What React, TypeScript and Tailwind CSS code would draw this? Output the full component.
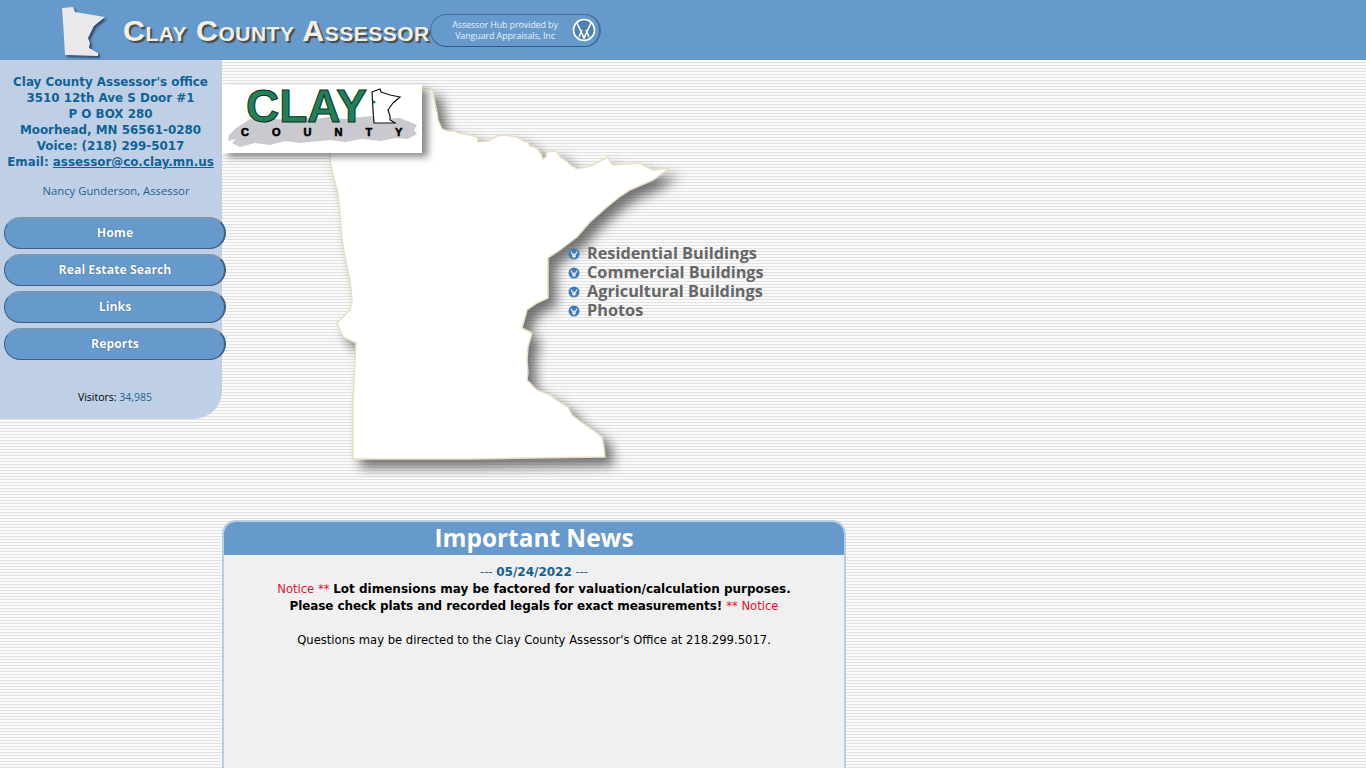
import React from "react";

const mapPts = "330,153 422,88 433,90 435,103 437,112 438,120 442,129 448,131 455,131 458,133 470,135 477,137 478,142 488,141 497,136 505,135 517,137 523,141 528,142 530,146 537,148 541,154 543,159 546,157 547,152 553,151 557,152 560,157 565,160 572,166 577,169 586,167 593,165 600,161 608,157 610,162 613,165 625,164 640,163 647,167 653,170 662,169 670,168 653,180 630,190 618,198 607,207 590,222 577,237 560,250 548,258 548,298 537,303 527,310 522,328 532,333 528,347 527,360 528,372 527,380 537,390 550,395 558,401 568,407 572,415 580,421 590,428 597,433 602,437 604,447 605,457 470,459 353,459 353,400 356,343 343,337 337,323 350,310 352,300 350,280 346,262 342,240 340,215 338,193 333,175 330,160";
const smallPts = "62,8 73,7 75,12 87,14 105,17 94,26 88,38 90,43 89,48 98,53 98,56 65,55 64,37";
const miniPts = "372,92 380,89 381,92 390,95 400,97 393,103 388,110 390,116 390,120 395,123 374,123 373,110";
const brushPts = "229,135 236,128 244,123 250,119 262,121 270,118 285,120 300,116 312,119 330,117 345,119 370,116 385,119 400,118 410,122 417,125 414,130 417,134 408,139 396,138 380,141 362,139 345,142 330,140 300,143 285,141 270,145 255,143 240,147 232,143 236,139 228,141";

function Bullet() {
  return (
    <svg width="12" height="12" viewBox="0 0 12 12" className="shrink-0">
      <circle cx="6" cy="6" r="5.5" fill="#3f7cbc" />
      <path d="M3 3.5 L6 9.5 L9 3.5 M4.5 9 L6 6 L7.5 9" fill="none" stroke="#dfe9f4" strokeWidth="1.2" />
    </svg>
  );
}

function NavButton({ label }: { label: string }) {
  return (
    <a className="flex h-[32px] w-[222px] items-center justify-center rounded-full border border-t-2 border-r-2 border-[#3d5f85] border-t-[#7f95ad] bg-[#6699cc] pl-[1px] text-[12.3px] font-bold text-white [font-family:'Open_Sans',sans-serif] [text-shadow:0_0_1px_#1f4f80]">
      {label}
    </a>
  );
}

export default function App() {
  const font = "[font-family:'DejaVu_Sans','Liberation_Sans',sans-serif]";
  return (
    <div className={`flex h-screen flex-col overflow-hidden bg-[repeating-linear-gradient(180deg,#fafafa_0px,#fafafa_2px,#e2e2e2_2px,#e2e2e2_3px)] ${font}`}>
      <header className="relative flex h-[60px] shrink-0 items-center bg-[#6699cc] pl-[123px] pt-[2px]">
        <svg className="absolute left-0 top-0" width="120" height="60" viewBox="0 0 120 60">
          <polygon points={smallPts} fill="#e9e9e9" className="drop-shadow-[2px_2px_1px_rgba(30,50,80,0.8)]" />
        </svg>
        <h1 className="z-10 w-[307px] whitespace-nowrap text-[30.4px] font-bold tracking-[0.5px] text-[#efefe8] [font-family:'Liberation_Sans',sans-serif] [font-variant:small-caps] [text-shadow:2px_2px_1px_#4a4a40]">
          Clay County Assessor
        </h1>
        <div className="mt-[-2px] flex h-[33px] w-[171px] items-center justify-between rounded-full border border-r-2 border-[#3f6c9a] border-b-[#2f5a86] pl-[15px] pr-[3px]">
          <p className="w-[118px] whitespace-nowrap text-center text-[9px] leading-[11px] tracking-[-0.15px] text-[#e8eff7] [font-family:'Open_Sans',sans-serif]">
            Assessor Hub provided by
            <br />
            Vanguard Appraisals, Inc
          </p>
          <svg width="24" height="24" viewBox="0 0 24 24">
            <circle cx="12" cy="12" r="10.5" fill="#4d80b5" stroke="#ffffff" strokeWidth="1.6" />
            <path d="M5 5 L12 20 L19 5 M7 19 L10 12 M14 12 L17 19 M8 15 H10 M14 15 H16" fill="none" stroke="#ffffff" strokeWidth="1.6" />
          </svg>
        </div>
      </header>

      <div className="flex min-h-0 flex-1">
        <aside className="h-[359px] w-[222px] shrink-0 rounded-br-[28px] bg-[#bfd0e6] pt-[14px]">
          <div className="pr-[1px] text-center text-[11.9px] font-bold leading-[16px] text-[#0f6297]">
            <p>Clay County Assessor's office</p>
            <p>3510 12th Ave S Door #1</p>
            <p>P O BOX 280</p>
            <p>Moorhead, MN 56561-0280</p>
            <p>Voice: (218) 299-5017</p>
            <p>
              Email: <a className="underline">assessor@co.clay.mn.us</a>
            </p>
          </div>
          <p className="mt-[13px] pl-[10px] text-center text-[11.3px] leading-[16px] text-[#1f5f90] [font-family:'Open_Sans',sans-serif]">Nancy Gunderson, Assessor</p>
          <nav className="relative z-10 mt-[18px] flex flex-col gap-[5px] pl-[4px]">
            <NavButton label="Home" />
            <NavButton label="Real Estate Search" />
            <NavButton label="Links" />
            <NavButton label="Reports" />
          </nav>
          <p className="mt-[30px] pl-[8px] text-center text-[10.5px] leading-[14px] text-black [font-family:'Open_Sans',sans-serif]">
            Visitors: <span className="text-[#1f5f90]">34,985</span>
          </p>
        </aside>

        <main className="flex min-w-0 flex-1 flex-col">
          <section className="relative h-[460px] shrink-0">
            <svg className="absolute left-0 top-0" width="700" height="460" viewBox="222 60 700 460">
              <polygon
                points={mapPts}
                fill="#ffffff"
                stroke="#e8dfc6"
                strokeWidth="1.5"
                className="drop-shadow-[8px_8px_6px_rgba(60,60,60,0.7)]"
              />
            </svg>
            <div className="absolute left-0 top-[25px] h-[68px] w-[200px] bg-white shadow-[6px_4px_7px_rgba(60,60,60,0.6)]">
              <svg className="absolute left-0 top-0" width="200" height="68" viewBox="222 85 200 68">
                <polygon points={brushPts} fill="#c9c9cf" />
                <polygon points={miniPts} fill="#ffffff" stroke="#111111" strokeWidth="1.2" />
                <circle cx="374" cy="102" r="1.5" fill="#1f8158" />
              </svg>
              <span className="absolute left-[24px] top-0 text-[46px] font-bold leading-[42px] text-[#1f8158] [-webkit-text-stroke:1px_#0d2e20] [font-family:'Liberation_Sans',sans-serif]">
                CLAY
              </span>
              <span className="absolute left-[19px] top-[42px] text-[11px] font-bold leading-[11px] tracking-[23px] text-black [-webkit-text-stroke:0.6px_#000000] [font-family:'Liberation_Sans',sans-serif]">
                COUNTY
              </span>
            </div>
            <ul className="absolute left-[346px] top-[184px] flex flex-col text-[16.3px] font-bold leading-[19px] text-[#666666] [font-family:'Open_Sans',sans-serif]">
              {["Residential Buildings", "Commercial Buildings", "Agricultural Buildings", "Photos"].map((t) => (
                <li key={t} className="flex items-center gap-[7px] whitespace-nowrap">
                  <Bullet />
                  {t}
                </li>
              ))}
            </ul>
          </section>

          <section className="flex min-h-0 w-[624px] flex-1 flex-col rounded-t-[14px] border-2 border-b-0 border-[#b9cde6] bg-[#f0f0f0]">
            <h2 className="h-[33px] shrink-0 rounded-t-[12px] bg-[#6699cc] text-center text-[24.4px] font-bold leading-[31px] text-white [font-family:'Open_Sans',sans-serif]">
              Important News
            </h2>
            <div className="pt-[9px] text-center text-[11.6px] leading-[16.8px] text-black">
              <p className="text-[#0f6297]">
                --- <b className="text-[12px]">05/24/2022</b> ---
              </p>
              <p>
                <span className="text-[#e8112d]">Notice ** </span>
                <b className="text-[12px]">Lot dimensions may be factored for valuation/calculation purposes.</b>
              </p>
              <p>
                <b className="text-[12px] tracking-[-0.1px]">Please check plats and recorded legals for exact measurements! </b>
                <span className="text-[#e8112d]">** Notice</span>
              </p>
              <p className="mt-[17.5px]">Questions may be directed to the Clay County Assessor's Office at 218.299.5017.</p>
            </div>
          </section>
        </main>
      </div>
    </div>
  );
}
